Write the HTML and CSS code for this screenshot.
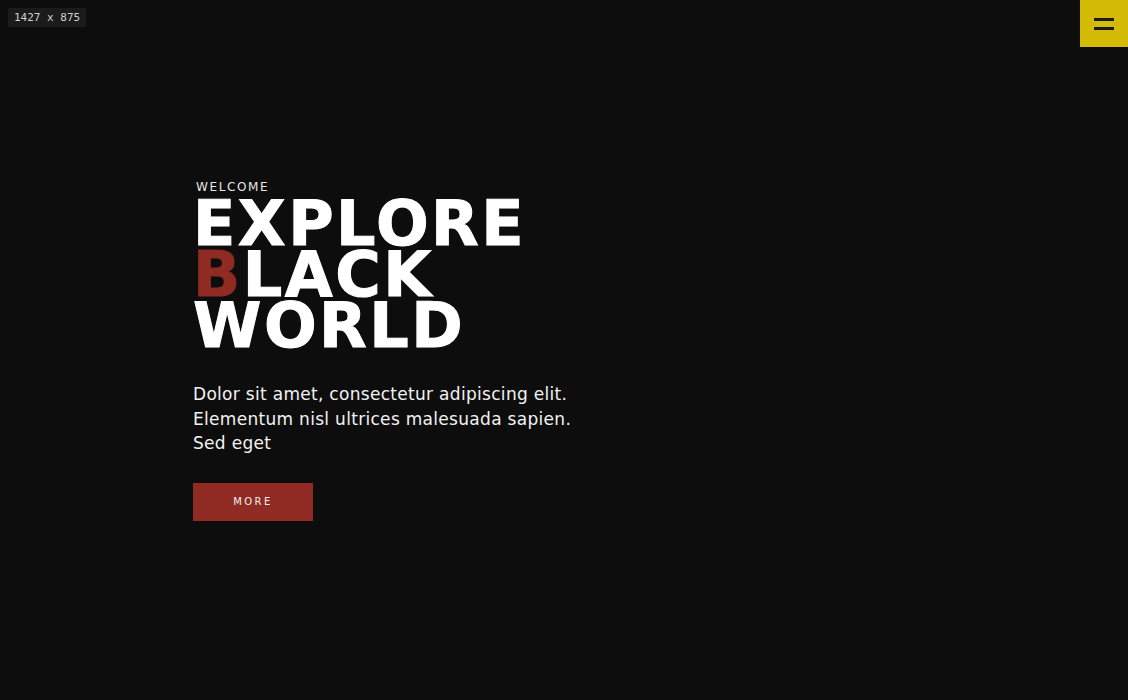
FILE: index.html
```html
<!DOCTYPE html>
<html lang="en">
<head>
<meta charset="utf-8">
<title>Explore Black World</title>
<link rel="stylesheet" href="styles.css">
</head>
<body>
<div class="badge">1427 x 875</div>
<button class="menu" aria-label="Menu"><span class="bar"></span><span class="bar"></span></button>
<main class="hero">
  <div class="hero-inner">
    <p class="eyebrow">WELCOME</p>
    <h1 class="title">EXPLORE<br><span class="accent">B</span>LACK<br>WORLD</h1>
    <p class="lead">Dolor sit amet, consectetur adipiscing elit.<br>Elementum nisl ultrices malesuada sapien.<br>Sed eget</p>
    <a class="btn" href="#">MORE</a>
  </div>
</main>
</body>
</html>
```
FILE: styles.css
```css
html, body {
  margin: 0;
  padding: 0;
  height: 100%;
}
body {
  background: #0d0d0d;
  color: #fff;
  font-family: "DejaVu Sans", sans-serif;
  overflow: hidden;
}
.badge {
  position: absolute;
  top: 8px;
  left: 8px;
  height: 19px;
  padding: 0 6px;
  background: #1b1b1b;
  color: #d0d0d0;
  font-family: "DejaVu Sans Mono", monospace;
  font-size: 11px;
  line-height: 19px;
}
.menu {
  position: absolute;
  top: 0;
  right: 0;
  width: 48px;
  height: 47px;
  border: 0;
  padding: 0;
  background: #d4bb06;
  display: flex;
  flex-direction: column;
  align-items: center;
  justify-content: center;
  gap: 6px;
}
.bar {
  display: block;
  width: 20px;
  height: 3px;
  background: #1a1a1a;
}
.hero {
  padding: 180px 0 0 193px;
}
.eyebrow {
  margin: 0 0 0 3px;
  font-size: 12px;
  line-height: 14px;
  letter-spacing: 1.6px;
  color: #e6e6e6;
}
.title {
  margin: 4px 0 0 0;
  font-weight: 900;
  font-size: 62px;
  line-height: 51px;
  letter-spacing: 2.5px;
  color: #fff;
  -webkit-text-stroke: 1px #fff;
}
.accent {
  color: #8f2b22;
  -webkit-text-stroke: 1px #8f2b22;
}
.lead {
  margin: 31px 0 0 0;
  font-size: 17px;
  line-height: 24.5px;
  letter-spacing: 0.3px;
  color: #f2f2f2;
}
.btn {
  display: flex;
  align-items: center;
  justify-content: center;
  width: 120px;
  height: 38px;
  margin-top: 27px;
  background: #8f2b22;
  color: #eee;
  font-size: 10px;
  letter-spacing: 2.4px;
  text-decoration: none;
}
```
